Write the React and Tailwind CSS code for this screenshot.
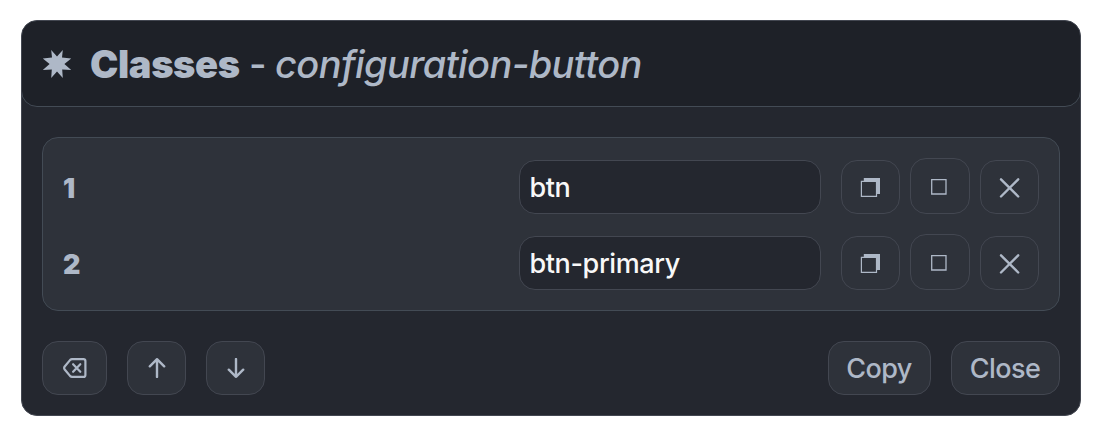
const button =
  'flex h-[54px] items-center justify-center rounded-[16px] border border-[#434751] bg-[#2e323a] text-[#aeb8c7]';

function Burst() {
  return (
    <svg width="30" height="30" viewBox="-15 -15 30 30" fill="currentColor" className="relative top-px">
      <path d="M5.8 -14L5 -6.6L14.2 -5.6L7.4 0L14.2 6L5.2 5.4L5.8 14L0 7.6L-5.8 14L-5.2 5.4L-14.2 6L-7.4 0L-14.2 -5.6L-5 -6.6L-5.8 -14L0 -7.4Z" />
    </svg>
  );
}

function Duplicate() {
  return (
    <svg width="20" height="20" viewBox="0 0 20 20" className="mr-px">
      <path d="M3.8 4V1H20V17H17V4Z" fill="currentColor" />
      <path d="M1.4 4.4H16.5V19.4H1.4Z" fill="none" stroke="currentColor" strokeWidth="1.2" />
    </svg>
  );
}

function Square() {
  return (
    <svg width="16" height="16" viewBox="0 0 16 16" fill="none" stroke="currentColor" strokeWidth="1.3">
      <path d="M0.7 0.7H15V15H0.7Z" />
    </svg>
  );
}

function Cross() {
  return (
    <svg width="21" height="21" viewBox="0 0 21 21" fill="none" stroke="currentColor" strokeWidth="2.4" strokeLinecap="round">
      <path d="M2 2.3L19.2 19.5M19.2 2.3L2 19.5" />
    </svg>
  );
}

function Erase() {
  return (
    <svg width="24" height="20" viewBox="0 0 24 20" fill="none" stroke="currentColor" strokeWidth="2.2" strokeLinecap="round" strokeLinejoin="round">
      <path d="M9 1.1H20.4Q22.4 1.1 22.4 3.1V16.9Q22.4 18.9 20.4 18.9H9Q8 18.9 7.2 18.1L1.7 11.5Q0.6 10 1.7 8.5L7.2 1.9Q8 1.1 9 1.1Z" />
      <path d="M10.1 6.2L17.3 13.8M17.3 6.2L10.1 13.8" />
    </svg>
  );
}

function Arrow({ down }) {
  return (
    <svg width="18" height="20" viewBox="0 0 18 20" fill="none" stroke="currentColor" strokeWidth="2.4" strokeLinecap="round" strokeLinejoin="round" className={down ? 'rotate-180' : ''}>
      <path d="M9 19V1.2M1.8 8.3L9 1.2L16.2 8.3" />
    </svg>
  );
}

function Row({ index, value }) {
  return (
    <div className="flex h-[56px] items-end">
      <div className="flex h-[54px] flex-1 items-center pt-1 text-[27px] font-black">{index}</div>
      <input
        defaultValue={value}
        className="h-[54px] w-[302px] rounded-[16px] border border-[#434751] bg-[#24272f] px-[9.5px] text-[27px] font-[450] tracking-[-0.38px] text-[#f8f8f8] outline-none"
      />
      <div className="ml-5 flex items-end gap-2.5">
        <button className={`${button} w-[59px]`}><Duplicate /></button>
        <button className={`${button} h-[56px]! w-[60px] pt-px pr-0.5`}><Square /></button>
        <button className={`${button} w-[59px]`}><Cross /></button>
      </div>
    </div>
  );
}

export default function App() {
  return (
    <div className="h-[438px] w-[1101px] bg-white pt-5 pl-[21px] font-['Inter',sans-serif] text-[#aeb8c7]">
      <div className="flex h-[396px] w-[1060px] flex-col overflow-hidden rounded-[16px] border border-[#434751] bg-[#24272f]">
        <header className="-mx-px -mt-px flex h-[87px] shrink-0 items-center rounded-[16px] border border-[#434b55] bg-[#1e2128] pl-5 pb-px">
          <Burst />
          <h1 className="ml-[18px] flex whitespace-pre pt-0.5 text-[38px] leading-[48px]">
            <span className="w-[159px] font-black tracking-[-0.4px]">Classes</span>
            <span className="w-[26px] font-medium">-</span>
            <em className="font-medium tracking-[-0.6px]">configuration-button</em>
          </h1>
        </header>
        <main className="mx-5 mt-[30px] flex h-[174px] w-[1018px] flex-col gap-5 rounded-[16px] border border-[#434b55] bg-[#2e323a] px-5 pt-5">
          <Row index={1} value="btn" />
          <Row index={2} value="btn-primary" />
        </main>
        <footer className="mx-5 mt-[30px] flex w-[1018px] gap-5 text-[27px] tracking-[-0.6px]">
          <button className={`${button} w-[65px]`}><Erase /></button>
          <button className={`${button} w-[59px]`}><Arrow /></button>
          <button className={`${button} w-[59px]`}><Arrow down /></button>
          <button className={`${button} ml-auto w-[103px] pt-0.5 pr-px font-[450]`}>Copy</button>
          <button className={`${button} w-[109px] pt-0.5 pr-px font-[450]`}>Close</button>
        </footer>
      </div>
    </div>
  );
}
